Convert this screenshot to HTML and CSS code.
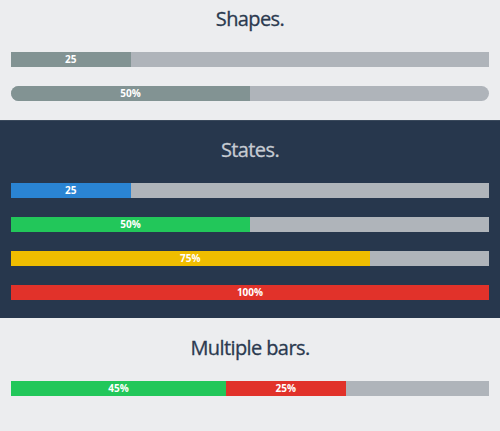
FILE: index.html
```html
<!DOCTYPE html>
<html lang="en">
<head>
    <meta charset="UTF-8">
    <meta name="viewport" content="width=device-width, initial-scale=1.0">
    <title>Progress Bars</title>
    <link rel="stylesheet" href="styles.css">
</head>
<body>
    <div class="section first">
        <h2>Shapes.</h2>
        <div class="progress">
            <div class="bar bar-default" style="width: 25%">25</div>
        </div>
        <div class="progress rounded">
            <div class="bar bar-default" style="width: 50%">50%</div>
        </div>
    </div>

    <div class="section dark">
        <h2>States.</h2>
        <div class="progress">
            <div class="bar bar-info" style="width: 25%">25</div>
        </div>
        <div class="progress">
            <div class="bar bar-success" style="width: 50%">50%</div>
        </div>
        <div class="progress">
            <div class="bar bar-warning" style="width: 75%">75%</div>
        </div>
        <div class="progress">
            <div class="bar bar-danger" style="width: 100%">100%</div>
        </div>
    </div>

    <div class="section">
        <h2>Multiple bars.</h2>
        <div class="progress">
            <div class="bar bar-success" style="width: 45%">45%</div>
            <div class="bar bar-danger" style="width: 25%">25%</div>
        </div>
    </div>
</body>
</html>
```

FILE: styles.css
```css
body {
    margin: 0;
    background-color: #ecedef;
    font-family: "Open Sans", Arial, sans-serif;
}
.section {
    padding: 18px 11px 18px;
}
.section.first {
    padding-top: 7px;
    padding-bottom: 19px;
}
.section h2 {
    margin: 0 0 21px;
    font-size: 20px;
    line-height: 24px;
    font-weight: 400;
    letter-spacing: -0.6px;
    text-align: center;
    color: #2b3a4f;
    -webkit-text-stroke: 0.3px currentColor;
}
.dark {
    background-color: #27374d;
    border-top: 1px solid #3a495c;
    padding-top: 17px;
}
.dark h2 {
    color: #c6cbd2;
}
.progress {
    display: flex;
    height: 15px;
    background: #afb4ba;
    overflow: hidden;
}
.progress + .progress {
    margin-top: 19px;
}
.progress.rounded {
    border-radius: 8px;
}
.bar {
    height: 100%;
    color: #fff;
    font-size: 10px;
    font-weight: 700;
    line-height: 15px;
    text-align: center;
}
.bar-default { background: #829393; }
.bar-info { background: #2a84d3; }
.bar-success { background: #22c75a; }
.bar-warning { background: #efbd00; }
.bar-danger { background: #e1322a; }
```
